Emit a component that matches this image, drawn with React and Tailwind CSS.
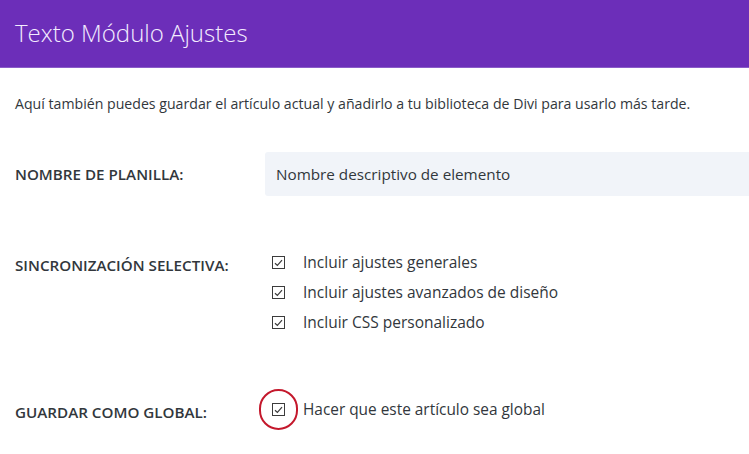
import { useState } from "react";

function CheckBox({ checked, onChange }) {
  return (
    <button
      type="button"
      onClick={onChange}
      className="w-[13px] h-[13px] border border-[#3c3c3c] flex items-center justify-center bg-white shrink-0"
    >
      {checked && (
        <svg width="9" height="8" viewBox="0 0 9 8" fill="none">
          <path d="M1 4.2 L3.4 6.5 L8 1.2" stroke="#3c3c3c" strokeWidth="1.2" />
        </svg>
      )}
    </button>
  );
}

function Row({ label, children, className = "" }) {
  return (
    <div className={`flex items-start ${className}`}>
      <p className="w-[250px] shrink-0 text-[15.2px] font-semibold text-[#32373c] uppercase">
        {label}
      </p>
      <div className="flex-1">{children}</div>
    </div>
  );
}

export default function App() {
  const [sync, setSync] = useState({ general: true, design: true, css: true });
  const [global, setGlobal] = useState(true);

  const options = [
    { key: "general", text: "Incluir ajustes generales" },
    { key: "design", text: "Incluir ajustes avanzados de diseño" },
    { key: "css", text: "Incluir CSS personalizado" },
  ];

  return (
    <div className="w-[749px] h-[454px] overflow-hidden bg-white font-['Open_Sans',sans-serif] text-[#32373c]">
      <div className="h-[67px] bg-[#6c2eb9] flex items-center px-[15px] shadow-[0_1px_0_#8a5cc8]">
        <h1 className="text-[24px] font-light text-[#f3ecff] leading-none -mt-[2px]">Texto Módulo Ajustes</h1>
      </div>

      <div className="px-[15px]">
        <p className="mt-[28px] text-[14.15px] leading-[18px] text-[#32373c]">
          Aquí también puedes guardar el artículo actual y añadirlo a tu biblioteca de Divi para usarlo más tarde.
        </p>

        <div className="flex items-center mt-[39px] mr-[-15px]">
          <p className="w-[250px] shrink-0 text-[15.2px] font-semibold uppercase">Nombre de planilla:</p>
          <div className="flex-1 h-[44px] bg-[#f1f4f9] rounded-l-[3px] flex items-center px-[11px] text-[15.25px] text-[#32373c]">
            Nombre descriptivo de elemento
          </div>
        </div>

        <Row label="Sincronización selectiva:" className="mt-[58px]">
          <div className="flex flex-col gap-[9px] pl-[7px] -mt-[2px]">
            {options.map((o) => (
              <label key={o.key} className="flex items-center gap-[18px] h-[21px] text-[15.5px]">
                <CheckBox
                  checked={sync[o.key]}
                  onChange={() => setSync({ ...sync, [o.key]: !sync[o.key] })}
                />
                <span>{o.text}</span>
              </label>
            ))}
          </div>
        </Row>

        <Row label="Guardar como global:" className="mt-[68px]">
          <label className="flex items-center gap-[18px] h-[21px] text-[15.4px] pl-[7px] -mt-[2px] relative">
            {/* red ring drawn round the global checkbox */}
            <span className="absolute left-[-6px] top-[-10px] w-[39px] h-[41px] rounded-full border-[2.5px] border-[#c4182c]" />
            <CheckBox checked={global} onChange={() => setGlobal(!global)} />
            <span>Hacer que este artículo sea global</span>
          </label>
        </Row>
      </div>
    </div>
  );
}
